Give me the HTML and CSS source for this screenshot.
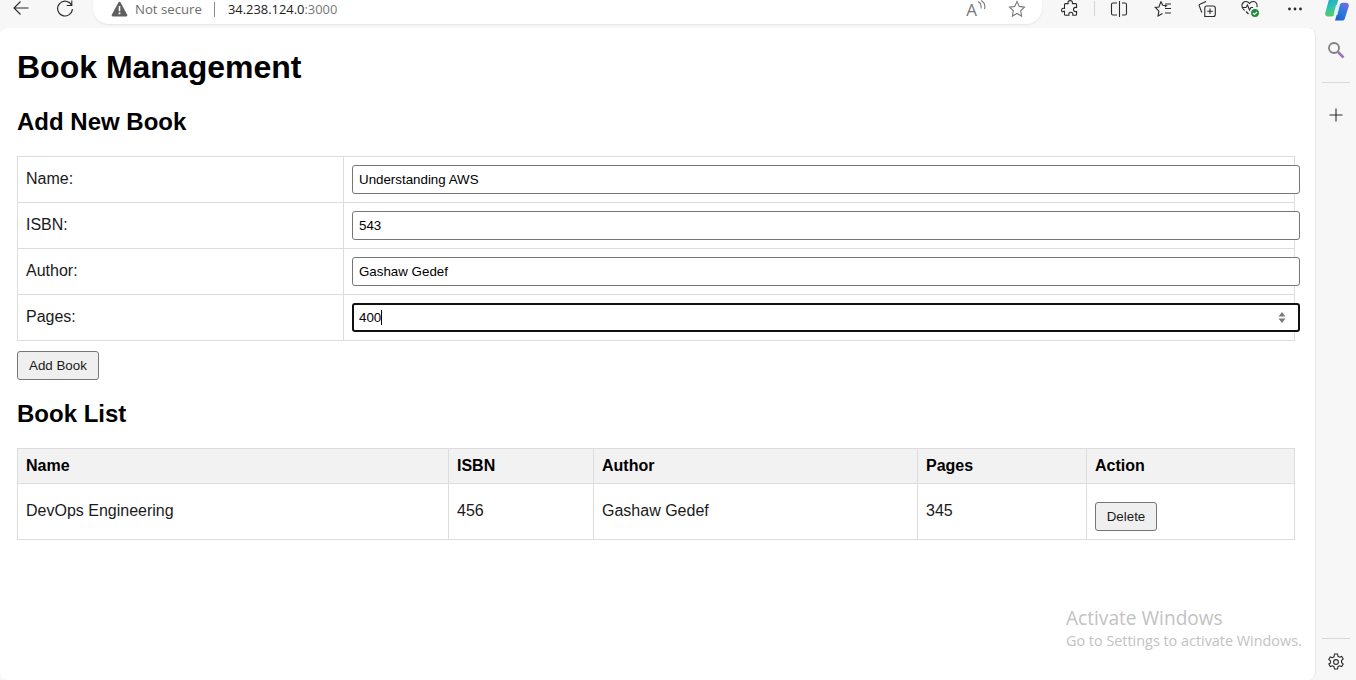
FILE: index.html
```html
<!DOCTYPE html>
<html lang="en">
<head>
    <meta charset="UTF-8">
    <title>Book Management</title>
    <link rel="stylesheet" href="styles.css">
</head>
<body>

<div class="toolbar">
    <span class="tool-icon nav-first">
        <svg width="18" height="18" viewBox="0 0 18 18"><path d="M16.5 8H2M8.5 1.5 2 8l6.500 6.500"/></svg>
    </span>
    <span class="tool-icon">
        <svg width="18" height="18" viewBox="0 0 18 18"><path d="M15.6 5.2A7.4 7.4 0 1 0 16.4 9M15.8 0.5v5h-5"/></svg>
    </span>

    <div class="address">
        <svg class="warn" width="17" height="16" viewBox="0 0 17 16"><path class="solid" d="M8.5 0.8c.5 0 .9.3 1.100.7l6.600 12.200c.4.8-.1 1.700-1 1.700H1.800c-.9 0-1.400-.9-1-1.700L7.400 1.500c.2-.4.6-.7 1.100-.7z"/><path class="knock" d="M7.700 5h1.600v5.200H7.700zM7.600 11.400h1.800v1.800H7.600z"/></svg>
        <span class="not-secure">Not secure</span>
        <span class="addr-sep"></span>
        <span class="url">34.238.124.0<span class="port">:3000</span></span>
        <span class="addr-right">
            <span class="read-aloud">A<svg width="9" height="11" viewBox="0 0 9 11"><path d="M1 1.500c2.800 1.500 3.500 4 3 7M4 0.500c3 1.500 4.500 4.500 3.500 8.500"/></svg></span>
            <svg class="grey-icon" width="18" height="18" viewBox="0 0 18 18"><path d="M9 1.500l2.300 4.900 5.200.7-3.800 3.700.9 5.300L9 13.500l-4.600 2.600.9-5.300L1.500 7.100l5.200-.7z"/></svg>
        </span>
    </div>

    <span class="tool-icon ext">
        <svg width="18" height="18" viewBox="0 0 18 18"><path d="M7 2.600C7 1.200 8 .6 9.200.6s2.200.8 2.200 2c0 .4 0 .7.100 1h3.100c.6 0 1 .4 1 1v2.900c-.4-.1-.7-.1-1.100-.1-1.200 0-2 1-2 2.100s.8 2.100 2 2.100c.4 0 .7 0 1.100-.1v2.800c0 .6-.4 1-1 1h-2.800c.1-.4.100-.7.100-1 0-1.200-1-2.100-2.100-2.100s-2 .9-2 2.100c0 .3 0 .6.100 1H4.500c-.6 0-1-.4-1-1v-3c-.4.100-.7.100-1 .1C1.300 12.400.5 11.400.5 10.300s.8-2 2-2c.3 0 .6 0 1 .1V4.600c0-.6.4-1 1-1h2.600C7 3.300 7 3 7 2.600z"/></svg>
    </span>
    <span class="tool-sep"></span>
    <span class="tool-icon">
        <svg width="18" height="18" viewBox="0 0 18 18"><path d="M7 3H3c-.8 0-1.500.7-1.500 1.500v9c0 .8.7 1.500 1.500 1.500h4M12 3h3c.8 0 1.500.7 1.500 1.500v9c0 .8-.7 1.500-1.500 1.500h-3M9.500 1v16"/></svg>
    </span>
    <span class="tool-icon">
        <svg width="18" height="18" viewBox="0 0 18 18"><path d="M7 1.500l1.700 3.700 3.800.5-1.500 1.500M8.500 13.500L4 16l.9-4.900L1.300 7.500l3.600-.5L7 1.500M11 4h6M11 8.500h6M11 13h6"/></svg>
    </span>
    <span class="tool-icon">
        <svg width="18" height="18" viewBox="0 0 18 18"><path d="M3.800 12.500 1.200 5.600c-.2-.6.100-1.200.7-1.400l6.200-2.800M6.800 16.500V8c0-1.200.8-2 2-2h6.500c1.200 0 2 .8 2 2v6.500c0 1.200-.8 2-2 2zM12 8.500v5.500M9.300 11.300h5.500"/></svg>
    </span>
    <span class="tool-icon">
        <svg width="20" height="18" viewBox="0 0 20 18"><path d="M3.500 10.500C1.800 9 .9 7.700.9 5.800c0-2.400 1.800-4.300 4-4.300 1.500 0 2.700.7 3.600 2 .9-1.300 2.100-2 3.600-2 2.200 0 4 1.900 4 4.300 0 .5-.1 1-.2 1.400M1.500 7.500h3.500l1.500-2.500 2 5 1.500-2.500h2M5 11.500l2.500 2.500"/><circle class="badge" cx="14" cy="13" r="4.500"/><path class="tick" d="M12 13l1.500 1.500L16 12"/></svg>
    </span>
    <span class="tool-icon">
        <svg width="16" height="4" viewBox="0 0 16 4"><circle class="solid-dark" cx="2.500" cy="2" r="1.400"/><circle class="solid-dark" cx="8" cy="2" r="1.400"/><circle class="solid-dark" cx="13.500" cy="2" r="1.400"/></svg>
    </span>
    <span class="copilot">
        <svg width="24" height="21" viewBox="0 0 24 21">
            <defs>
                <linearGradient id="cop-left" x1="0" y1="0" x2="0.3" y2="1">
                    <stop offset="0" stop-color="#1f9fd8"/>
                    <stop offset="0.6" stop-color="#2ec4b0"/>
                    <stop offset="1" stop-color="#58c96a"/>
                </linearGradient>
                <linearGradient id="cop-right" x1="0.8" y1="0" x2="0.2" y2="1">
                    <stop offset="0" stop-color="#7a6ae0"/>
                    <stop offset="0.5" stop-color="#2a7be0"/>
                    <stop offset="1" stop-color="#1a62c8"/>
                </linearGradient>
            </defs>
            <path class="cop-a" d="M6 -3h8L9.500 14c-.5 1.800-1.500 2.500-3 2.500H3C.8 16.500-.3 14.800.3 12.800L3.800 0C4.300-2 5-3 6-3z"/>
            <path class="cop-b" d="M18 20.500h-8l4.500-15c.5-1.800 1.500-2.800 3-2.800H21c2.200 0 3.300 1.800 2.700 3.800L20 18c-.5 1.700-1 2.500-2 2.500z"/>
            <path class="cop-c" d="M11 5h3.800L12.400 15H8.500z"/>
        </svg>
    </span>
</div>

<div class="window">
    <div class="page">
        <h1>Book Management</h1>

        <h2>Add New Book</h2>
        <form id="book-form">
            <table class="form-table">
                <tr>
                    <td class="label-cell"><label for="name">Name:</label></td>
                    <td><input type="text" id="name" value="Understanding AWS"></td>
                </tr>
                <tr>
                    <td class="label-cell"><label for="isbn">ISBN:</label></td>
                    <td><input type="text" id="isbn" value="543"></td>
                </tr>
                <tr>
                    <td class="label-cell"><label for="author">Author:</label></td>
                    <td><input type="text" id="author" value="Gashaw Gedef"></td>
                </tr>
                <tr>
                    <td class="label-cell"><label>Pages:</label></td>
                    <td>
                        <div class="number-field">
                            <span class="number-text">400</span><span class="caret"></span>
                            <svg class="spinner" width="8" height="13" viewBox="0 0 8 13"><path d="M4 1 7.500 5.500H.5zM4 12 .5 7.500h7z"/></svg>
                        </div>
                    </td>
                </tr>
            </table>
            <button type="button" class="btn">Add Book</button>
        </form>

        <h2>Book List</h2>
        <table class="book-table">
            <thead>
                <tr>
                    <th class="col-name">Name</th>
                    <th class="col-isbn">ISBN</th>
                    <th class="col-author">Author</th>
                    <th class="col-pages">Pages</th>
                    <th>Action</th>
                </tr>
            </thead>
            <tbody>
                <tr>
                    <td>DevOps Engineering</td>
                    <td>456</td>
                    <td>Gashaw Gedef</td>
                    <td>345</td>
                    <td class="action-cell"><button type="button" class="btn btn-delete">Delete</button></td>
                </tr>
            </tbody>
        </table>

        <div class="watermark">
            <div class="watermark-title">Activate Windows</div>
            <div class="watermark-sub">Go to Settings to activate Windows.</div>
        </div>
    </div>

    <div class="sidebar">
        <svg class="side-search" width="18" height="18" viewBox="0 0 18 18"><circle class="lens" cx="7" cy="7" r="5"/><path class="handle" d="M11 11l5.500 5.500"/></svg>
        <span class="side-line"></span>
        <svg class="side-plus" width="14" height="14" viewBox="0 0 14 14"><path d="M7 .5v13M.5 7h13"/></svg>
        <span class="side-line side-bottom"></span>
        <svg class="side-gear" width="18" height="18" viewBox="0 0 18 18"><path d="M7.500 1h3l.5 2.300 1.500.9 2.200-.8 1.500 2.600-1.700 1.600v1.800l1.700 1.600-1.500 2.600-2.200-.8-1.500.9-.5 2.300h-3l-.5-2.300-1.500-.9-2.200.8-1.500-2.600L3.500 9.900V8.100L1.800 6.500l1.500-2.600 2.200.8 1.500-.9z"/><circle cx="9" cy="9" r="2.400"/></svg>
    </div>
</div>

</body>
</html>
```

FILE: styles.css
```css
* {
    box-sizing: border-box;
}

html, body {
    margin: 0;
    height: 680px;
    overflow: hidden;
}

body {
    background-color: #f7f7f7;
    font-family: "Liberation Sans", Arial, sans-serif;
    color: #000;
}

svg path, svg circle {
    fill: none;
    stroke: #2b2b2b;
    stroke-width: 1.1;
}

/* browser chrome */
.toolbar {
    display: flex;
    align-items: flex-start;
    height: 28px;
    font-family: "Open Sans", "Noto Sans", sans-serif;
}

.tool-icon {
    display: flex;
    justify-content: center;
    align-items: center;
    flex: none;
    width: 44px;
    height: 17px;
}

.nav-first {
    margin-left: -1px;
}

.address {
    display: flex;
    align-items: center;
    width: 949px;
    height: 24px;
    margin: 0 6px 0 6px;
    padding: 0 16px 6px 18px;
    background-color: #fff;
    border-radius: 0 0 16px 16px;
    box-shadow: 0 1px 2px rgba(0, 0, 0, 0.08);
    font-size: 13.200px;
    white-space: nowrap;
}

.warn {
    flex: none;
}

.warn .solid {
    fill: #5f5f5f;
    stroke: none;
}

.warn .knock {
    fill: #fff;
    stroke: none;
}

.not-secure {
    margin-left: 7px;
    color: #6d6d6d;
}

.addr-sep {
    width: 1px;
    height: 15px;
    margin: 0 13px 0 12px;
    background-color: #8a8a8a;
}

.url {
    font-size: 12.900px;
    color: #222;
}

.port {
    color: #777;
}

.addr-right {
    display: flex;
    align-items: center;
    gap: 22px;
    margin-left: auto;
}

.read-aloud {
    display: flex;
    align-items: flex-start;
    font-size: 17px;
    line-height: 19px;
    color: #777;
}

.read-aloud path, .grey-icon path {
    stroke: #7a7a7a;
}

.ext {
    margin-right: 2px;
}

.tool-sep {
    flex: none;
    width: 1px;
    height: 15px;
    margin: 1px 2px 0 0;
    background-color: #d4d4d4;
}

.badge {
    fill: #1f8a3a;
    stroke: #f7f7f7;
}

.tick {
    stroke: #fff;
}

circle.solid-dark {
    fill: #2b2b2b;
    stroke: none;
}

.copilot {
    flex: none;
    width: 24px;
    height: 21px;
    margin-left: 8px;
}

.copilot svg {
    display: block;
    overflow: hidden;
}

.copilot .cop-a {
    fill: url(#cop-left);
    stroke: none;
}

.copilot .cop-b {
    fill: url(#cop-right);
    stroke: none;
}

.copilot .cop-c {
    fill: #dff1fb;
    stroke: none;
}

.window {
    display: flex;
    height: 652px;
}

/* the page itself */
.page {
    position: relative;
    width: 1316px;
    padding: 21px 20px 0 17px;
    background-color: #fff;
    border-right: 1px solid #e6e6e6;
    border-radius: 8px;
}

h1 {
    margin: 0 0 22px;
    font-size: 32px;
    line-height: 37px;
}

h2 {
    margin: 20px 0;
    font-size: 24px;
    line-height: 28px;
}

table {
    width: 100%;
    border-collapse: collapse;
    font-size: 16px;
}

td, th {
    padding: 8px;
    border: 1px solid #ddd;
    text-align: left;
    color: #1a1a1a;
}

th {
    background-color: #f2f2f2;
    color: #000;
}

.form-table {
    table-layout: fixed;
}

.label-cell {
    width: 326px;
    padding-bottom: 10px;
}

/* inputs stick out past the table and sit over its right border */
input, .number-field {
    display: block;
    position: relative;
    width: 948px;
    height: 29px;
    padding: 6px;
    border: 1px solid #767676;
    border-radius: 3px;
    background-color: #fff;
    font-family: "Liberation Sans", Arial, sans-serif;
    font-size: 13.333px;
    color: #000;
}

.number-field {
    display: flex;
    align-items: center;
    border: 2px solid #101010;
    padding: 0 12px 0 5px;
}

.caret {
    width: 1px;
    height: 15px;
    background-color: #000;
}

.spinner {
    margin-left: auto;
}

.spinner path {
    fill: #7a7a7a;
    stroke: none;
}

.btn {
    display: block;
    height: 29px;
    margin-top: 10px;
    padding: 0 11px;
    border: 1px solid #767676;
    border-radius: 3px;
    background-color: #efefef;
    font-family: "Liberation Sans", Arial, sans-serif;
    font-size: 13.333px;
    color: #1a1a1a;
}

.btn-delete {
    width: 62px;
    padding: 0;
}

.book-table td {
    padding-bottom: 10px;
}

.book-table .action-cell {
    padding-bottom: 8px;
}

.col-name {
    width: 431px;
}

.col-isbn {
    width: 145px;
}

.col-author {
    width: 324px;
}

.col-pages {
    width: 169px;
}

/* windows watermark */
.watermark {
    position: absolute;
    top: 577px;
    left: 1066px;
    font-family: "Open Sans", "Noto Sans", sans-serif;
    color: #c2c2c2;
    white-space: nowrap;
}

.watermark-title {
    font-size: 19.100px;
    line-height: 26px;
}

.watermark-sub {
    font-size: 14.400px;
    line-height: 20px;
}

/* edge sidebar */
.sidebar {
    display: flex;
    flex-direction: column;
    align-items: center;
    flex: 1;
    padding-top: 13px;
}

.side-search .lens {
    stroke: #7f7f7f;
    stroke-width: 1.800;
}

.side-search .handle {
    stroke: #9a6fc4;
    stroke-width: 2.500;
}

.side-line {
    width: 28px;
    height: 1px;
    margin-top: 23px;
    background-color: #d8d8d8;
}

.side-plus {
    margin-top: 25px;
}

.side-bottom {
    margin-top: auto;
}

.side-gear {
    margin: 14px 0 9px;
}
```
